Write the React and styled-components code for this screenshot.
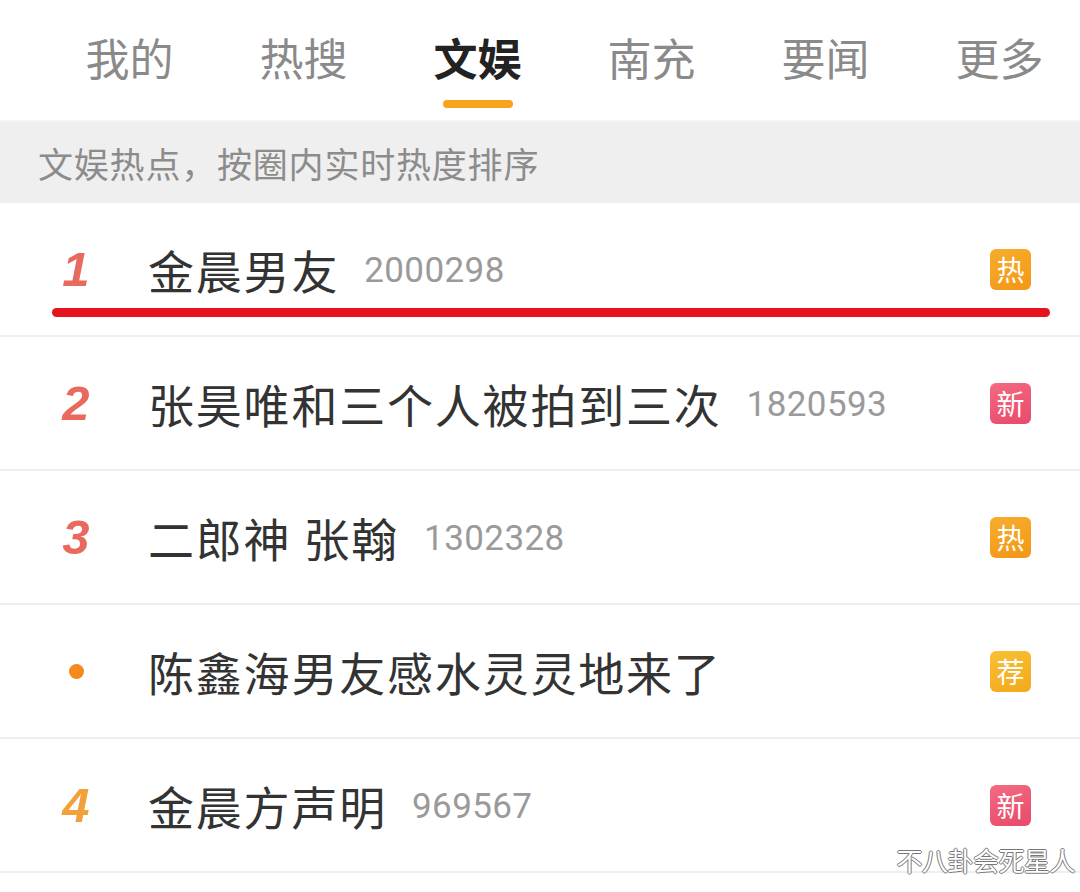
import React from 'react';
import styled, {createGlobalStyle} from 'styled-components';

const GlobalStyle = createGlobalStyle`
  html, body {
    margin: 0;
    padding: 0;
    background: #fff;
  }
  body {
    font-family: "Noto Sans CJK SC", "Noto Sans", sans-serif;
  }
`;

const Page = styled.div`
  position: relative;
  width: 1080px;
  height: 892px;
  overflow: hidden;
  background: #fff;
`;

const TabBar = styled.div`
  display: flex;
  gap: 85px;
  height: 120px;
  padding-left: 85px;
  border-bottom: 2px solid #f6f6f6;
`;

const Tab = styled.div`
  display: flex;
  flex-direction: column;
  align-items: center;
  padding-top: 36px;
  width: 89px;
  flex-shrink: 0;
`;

const TabText = styled.span`
  font-size: 44px;
  line-height: 43px;
  white-space: nowrap;
  color: ${p => (p.$active ? '#222' : '#8a8a8a')};
  font-weight: ${p => (p.$active ? 700 : 400)};
`;

const Indicator = styled.div`
  margin-top: 21px;
  width: 70px;
  height: 8px;
  border-radius: 4px;
  background: ${p => (p.$show ? '#f5a41c' : 'transparent')};
`;

const SubHeader = styled.div`
  display: flex;
  align-items: center;
  height: 81px;
  padding-left: 38px;
  background: #efefef;
  font-size: 35px;
  letter-spacing: 0.8px;
  color: #8c8c8c;
`;

const List = styled.div`
  display: flex;
  flex-direction: column;
`;

const Row = styled.div`
  position: relative;
  display: flex;
  align-items: center;
  height: 132px;
  padding-left: 40px;
  padding-right: 49px;
  border-bottom: 2px solid #efefef;
`;

const Rank = styled.div`
  width: 72px;
  margin-right: 36px;
  display: flex;
  justify-content: center;
  font-family: "Liberation Sans", Arial, sans-serif;
  font-style: italic;
  font-weight: 700;
  font-size: 49px;
  color: ${p => p.$color};
`;

const Dot = styled.span`
  width: 15px;
  height: 15px;
  border-radius: 50%;
  background: #f28a1e;
`;

const Title = styled.span`
  font-size: 46px;
  letter-spacing: 1.8px;
  color: #333;
  white-space: nowrap;
`;

const Count = styled.span`
  margin-left: 25px;
  font-family: Roboto, "Liberation Sans", sans-serif;
  font-size: 35px;
  letter-spacing: 0.4px;
  color: #9a9a9a;
  padding-top: 2px;
`;

const Badge = styled.span`
  margin-left: auto;
  width: 41px;
  height: 41px;
  border-radius: 6px;
  display: flex;
  align-items: center;
  justify-content: center;
  font-size: 28px;
  color: #fff;
  background: ${p => p.$bg};
`;

const RedMark = styled.div`
  position: absolute;
  left: 52px;
  top: 105px;
  width: 998px;
  height: 9px;
  border-radius: 5px;
  background: #e5141c;
`;

const Watermark = styled.div`
  position: absolute;
  right: 5px;
  bottom: 14px;
  font-size: 26px;
  letter-spacing: -0.5px;
  color: #fff;
  text-shadow: -1px 0 #777, 1px 0 #777, 0 -1px #777, 0 1px #777;
`;

const tabs = ['我的', '热搜', '文娱', '南充', '要闻', '更多'];

const badges = {
  热: 'linear-gradient(160deg, #f7ad2c, #f39617)',
  新: 'linear-gradient(160deg, #f36b82, #e9496a)',
  荐: 'linear-gradient(160deg, #f8c033, #f4a81d)',
};

const items = [
  {rank: '1', color: '#e8695d', title: '金晨男友', count: '2000298', badge: '热', marked: true},
  {rank: '2', color: '#e8695d', title: '张昊唯和三个人被拍到三次', count: '1820593', badge: '新'},
  {rank: '3', color: '#e8695d', title: '二郎神 张翰', count: '1302328', badge: '热'},
  {rank: null, title: '陈鑫海男友感水灵灵地来了', badge: '荐'},
  {rank: '4', color: '#f1a03a', title: '金晨方声明', count: '969567', badge: '新'},
];

const App = () => {
  return (
    <Page>
      <GlobalStyle />
      <TabBar>
        {tabs.map(t => (
          <Tab key={t}>
            <TabText $active={t === '文娱'}>{t}</TabText>
            <Indicator $show={t === '文娱'} />
          </Tab>
        ))}
      </TabBar>

      <SubHeader>文娱热点，按圈内实时热度排序</SubHeader>

      <List>
        {items.map(item => (
          <Row key={item.title}>
            <Rank $color={item.color}>{item.rank ? item.rank : <Dot />}</Rank>
            <Title>{item.title}</Title>
            {item.count && <Count>{item.count}</Count>}
            <Badge $bg={badges[item.badge]}>{item.badge}</Badge>
            {item.marked && <RedMark />}
          </Row>
        ))}
      </List>

      <Watermark>不八卦会死星人</Watermark>
    </Page>
  );
};

export default App;
